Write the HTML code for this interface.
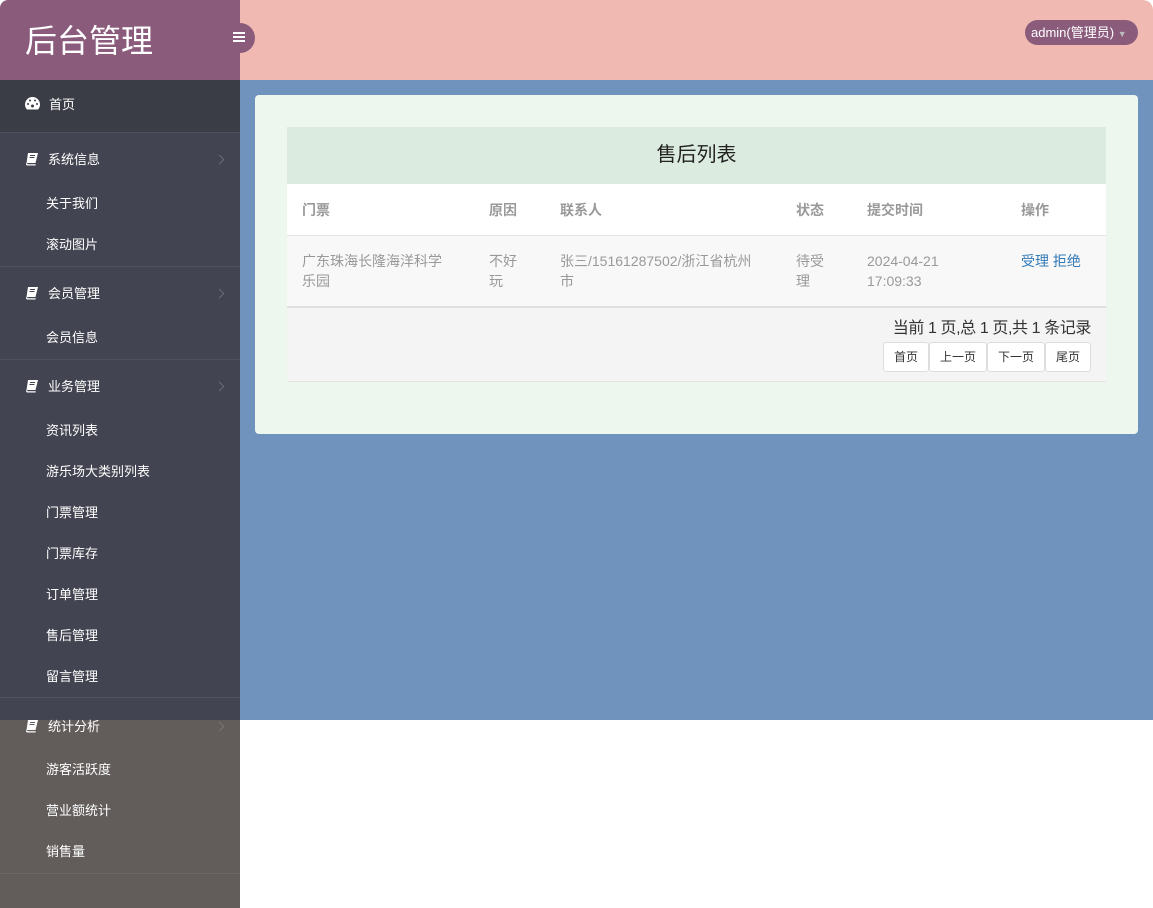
<!DOCTYPE html>
<html><head><meta charset="utf-8">
<style>
*{margin:0;padding:0;box-sizing:border-box}
body{width:1153px;height:908px;position:relative;overflow:hidden;background:#fff;font-family:"Liberation Sans","Noto Sans CJK SC",sans-serif}
.abs{position:absolute}
.side{left:0;top:80px;width:240px;height:828px;background:#434451}
.side .low{position:absolute;left:0;top:640px;width:240px;height:188px;background:#625c5b}
.home{left:0;top:80px;width:240px;height:52px;background:#3b3d46}
.it{position:absolute;color:#fff;font-size:13px;line-height:16px}
.sep{position:absolute;left:0;width:240px;height:1px;background:#50515d}
.chev{position:absolute;left:216px;width:7px;height:7px;border-right:1px solid #6a6b76;border-top:1px solid #6a6b76;transform:rotate(45deg)}
.bk{position:absolute;left:25px}
.c{position:absolute;font-size:14px;color:#999;line-height:20px}
.h{font-weight:bold}
.btn{position:absolute;top:342px;height:30px;border:1px solid #ddd;background:#fff;border-radius:3px;font-size:12px;color:#333;text-align:center;line-height:28px}
</style></head><body>
<div class="abs" style="left:0;top:0;width:240px;height:80px;background:#8b5b7c;border-top-left-radius:8px"></div>
<div class="abs" style="left:25px;top:21px;color:#fff;font-size:32px;line-height:40px">后台管理</div>
<div class="abs" style="left:240px;top:0;width:913px;height:80px;background:#f0bab3;border-top-right-radius:10px"></div>
<div class="abs" style="left:225px;top:23px;width:30px;height:30px;border-radius:15px;background:#8b5b7c"></div>
<div class="abs" style="left:233px;top:32px;width:12px;height:2px;background:#fff;box-shadow:0 4px 0 #fff,0 8px 0 #fff"></div>
<div class="abs" style="left:1025px;top:20px;width:113px;height:25px;border-radius:13px;background:#8b5b7c;color:#fff;font-size:13px;line-height:25px;padding-left:6px">admin(管理员) <span style="color:#bbb;font-size:9px">▼</span></div>
<div class="abs" style="left:240px;top:80px;width:913px;height:640px;background:#7093be"></div>

<div class="abs side"><div class="low"></div></div>
<div class="abs home"></div>
<svg class="abs" style="left:25px;top:97px" width="15" height="13" viewBox="0 0 15 13"><path d="M7.5 0A7.5 7.5 0 0 0 0 7.5c0 2 .8 3.8 2 5h11c1.2-1.2 2-3 2-5A7.5 7.5 0 0 0 7.5 0z" fill="#fff"/><circle cx="7.5" cy="9" r="1.5" fill="#3b3d46"/><circle cx="3" cy="7" r="1" fill="#3b3d46"/><circle cx="12" cy="7" r="1" fill="#3b3d46"/><circle cx="5" cy="3.5" r="1" fill="#3b3d46"/><circle cx="10" cy="3.5" r="1" fill="#3b3d46"/></svg>
<div class="it" style="left:49px;top:97px">首页</div>
<div class="sep" style="top:132px"></div>

<svg class="bk" style="top:152px" width="14" height="14" viewBox="0 0 14 14"><path d="M3 1h10l-2.5 10H1.5z M1.5 11c-1 1.5 0 2.5 1 2.5h8l.3-1.3H3c-.8 0-1-.7-.7-1.2z" fill="#fff"/><path d="M5 3.5h5M4.5 5.5h5" stroke="#434451" stroke-width="1"/></svg>
<div class="it" style="left:48px;top:152px">系统信息</div><div class="chev" style="top:156px"></div>
<div class="it" style="left:46px;top:196px">关于我们</div>
<div class="it" style="left:46px;top:237px">滚动图片</div>
<div class="sep" style="top:266px"></div>
<svg class="bk" style="top:286px" width="14" height="14" viewBox="0 0 14 14"><path d="M3 1h10l-2.5 10H1.5z M1.5 11c-1 1.5 0 2.5 1 2.5h8l.3-1.3H3c-.8 0-1-.7-.7-1.2z" fill="#fff"/><path d="M5 3.5h5M4.5 5.5h5" stroke="#434451" stroke-width="1"/></svg>
<div class="it" style="left:48px;top:286px">会员管理</div><div class="chev" style="top:290px"></div>
<div class="it" style="left:46px;top:330px">会员信息</div>
<div class="sep" style="top:359px"></div>
<svg class="bk" style="top:379px" width="14" height="14" viewBox="0 0 14 14"><path d="M3 1h10l-2.5 10H1.5z M1.5 11c-1 1.5 0 2.5 1 2.5h8l.3-1.3H3c-.8 0-1-.7-.7-1.2z" fill="#fff"/><path d="M5 3.5h5M4.5 5.5h5" stroke="#434451" stroke-width="1"/></svg>
<div class="it" style="left:48px;top:379px">业务管理</div><div class="chev" style="top:383px"></div>
<div class="it" style="left:46px;top:423px">资讯列表</div>
<div class="it" style="left:46px;top:464px">游乐场大类别列表</div>
<div class="it" style="left:46px;top:505px">门票管理</div>
<div class="it" style="left:46px;top:546px">门票库存</div>
<div class="it" style="left:46px;top:587px">订单管理</div>
<div class="it" style="left:46px;top:628px">售后管理</div>
<div class="it" style="left:46px;top:669px">留言管理</div>
<div class="sep" style="top:697px"></div>
<svg class="bk" style="top:719px" width="14" height="14" viewBox="0 0 14 14"><path d="M3 1h10l-2.5 10H1.5z M1.5 11c-1 1.5 0 2.5 1 2.5h8l.3-1.3H3c-.8 0-1-.7-.7-1.2z" fill="#fff"/><path d="M5 3.5h5M4.5 5.5h5" stroke="#625c5b" stroke-width="1"/></svg>
<div class="it" style="left:48px;top:719px">统计分析</div><div class="chev" style="top:723px;border-color:#7a7473"></div>
<div class="it" style="left:46px;top:762px">游客活跃度</div>
<div class="it" style="left:46px;top:803px">营业额统计</div>
<div class="it" style="left:46px;top:844px">销售量</div>
<div class="sep" style="top:873px;background:#6e6867"></div>

<div class="abs" style="left:255px;top:95px;width:883px;height:339px;background:#edf7ee;border-radius:4px"></div>
<div class="abs" style="left:287px;top:127px;width:819px;height:57px;background:#dcebdf;text-align:center;font-size:20px;line-height:57px;color:#222">售后列表</div>
<div class="abs" style="left:287px;top:184px;width:819px;height:52px;background:#fff;border-bottom:1px solid #e4e4e4"></div>
<div class="abs" style="left:287px;top:236px;width:819px;height:72px;background:#f8f8f8;border-bottom:2px solid #e0e0e0"></div>
<div class="abs" style="left:287px;top:308px;width:819px;height:74px;background:#f4f4f4;border-bottom:1px solid #e4e4e4"></div>
<div class="c h" style="left:302px;top:200px">门票</div>
<div class="c h" style="left:489px;top:200px">原因</div>
<div class="c h" style="left:560px;top:200px">联系人</div>
<div class="c h" style="left:796px;top:200px">状态</div>
<div class="c h" style="left:867px;top:200px">提交时间</div>
<div class="c h" style="left:1021px;top:200px">操作</div>
<div class="c" style="left:302px;top:251px;width:150px">广东珠海长隆海洋科学乐园</div>
<div class="c" style="left:489px;top:251px;width:32px">不好玩</div>
<div class="c" style="left:560px;top:251px;width:200px">张三/15161287502/浙江省杭州市</div>
<div class="c" style="left:796px;top:251px;width:32px">待受理</div>
<div class="c" style="left:867px;top:251px;width:100px">2024-04-21 17:09:33</div>
<div class="c" style="left:1021px;top:251px;color:#337ab7">受理 拒绝</div>
<div class="abs" style="right:62px;top:319px;font-size:16px;color:#333;line-height:20px;letter-spacing:-0.4px">当前 1 页,总 1 页,共 1 条记录</div>
<div class="btn" style="left:883px;width:46px">首页</div>
<div class="btn" style="left:929px;width:58px">上一页</div>
<div class="btn" style="left:987px;width:58px">下一页</div>
<div class="btn" style="left:1045px;width:46px">尾页</div>
</body></html>
